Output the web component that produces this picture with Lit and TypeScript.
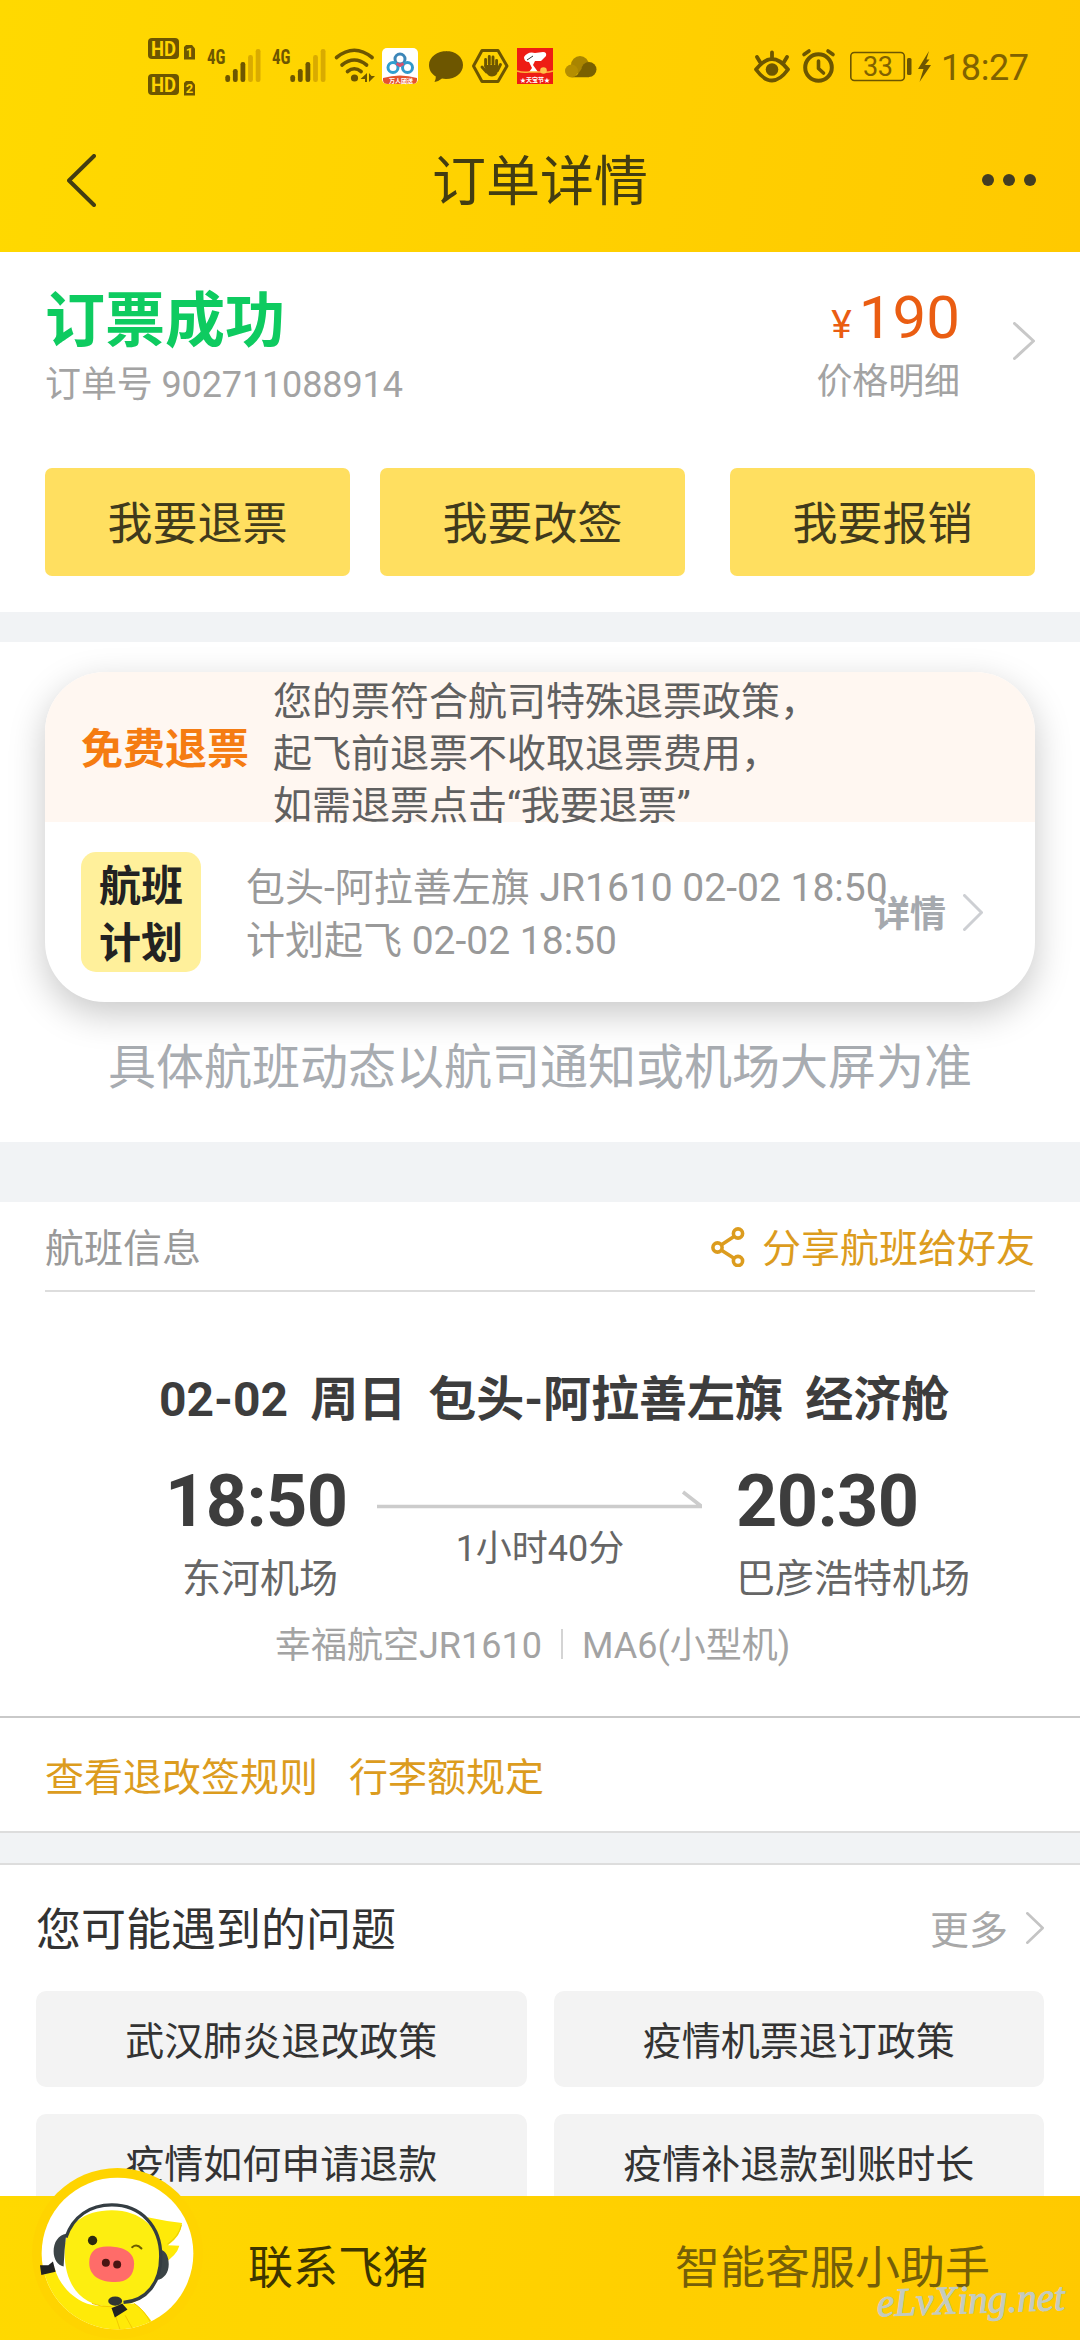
import { LitElement, html, css, svg } from "lit";
import { customElement, property } from "lit/decorators.js";

const FONT = css`Roboto, "Noto Sans CJK SC", sans-serif`;

@customElement("chevron-icon")
class ChevronIcon extends LitElement {
  @property({ type: Number }) w = 20;
  @property({ type: Number }) h = 36;
  @property({ type: Number }) thick = 3;
  @property({ type: Boolean }) back = false;

  static styles = css`
    :host { display: block; flex: none; }
    .icon { display: block; fill: none; stroke: currentColor; stroke-linecap: round; stroke-linejoin: round; }
  `;

  render() {
    const { w, h, thick: t } = this;
    const a = this.back ? w - t / 2 : t / 2;
    const b = this.back ? t / 2 : w - t / 2;
    return html`<svg class="icon" width=${w} height=${h} viewBox="0 0 ${w} ${h}" stroke-width=${t}>
      <path d="M${a} ${t / 2}L${b} ${h / 2}L${a} ${h - t / 2}" />
    </svg>`;
  }
}

@customElement("phone-status")
class PhoneStatus extends LitElement {
  static styles = css`
    :host { display: flex; justify-content: space-between; height: 90px; padding: 20px 0 0 130px; font-family: ${FONT}; }
    .icons { display: block; flex: none; }
    .ink { fill: #6d5600; }
    .line { fill: none; stroke: #6d5600; stroke-linecap: round; stroke-linejoin: round; }
    .dim { fill: #d9ab00; }
    .hd { font: 700 21px Roboto, sans-serif; fill: #ffd400; }
    .sim { font: 700 13px Roboto, sans-serif; fill: #ffd400; }
    .net { font: 700 21px "Roboto Condensed", Roboto, sans-serif; fill: #6d5600; }
    .pct { font: 400 27px Roboto, sans-serif; fill: #806200; }
    .time { font: 400 36px Roboto, sans-serif; fill: #806200; }
    .tiny { font: 700 6px "Noto Sans CJK SC", sans-serif; fill: #fff; }
  `;

  private hd(y: number, n: string) {
    return svg`<g transform="translate(148 ${y})">
      <rect class="ink" width="31" height="21" rx="4"/>
      <text class="hd" x="3" y="18" textLength="25" lengthAdjust="spacingAndGlyphs">HD</text>
      <path class="ink" d="M38 7h6l3 3.500v11H36V9z"/>
      <text class="sim" x="37.800" y="19.300">${n}</text></g>`;
  }

  private signal(x: number) {
    const tops = [75, 69, 62, 55, 49];
    return svg`<g transform="translate(${x} 0)">
      <text class="net" x="0" y="64" textLength="18.500" lengthAdjust="spacingAndGlyphs">4G</text>
      ${tops.map((t, i) => svg`<rect class=${i < 3 ? "ink" : "dim"} x=${18.3 + i * 7.6} y=${t} width="4.800" height=${82 - t} rx="2.200"/>`)}
    </g>`;
  }

  render() {
    return html`
      <svg class="icons" width="480" height="90" viewBox="130 20 480 90">
        ${this.hd(38, "1")}${this.hd(74, "2")}${this.signal(207)}${this.signal(272)}
        <g class="line" stroke-width="3.6">
          <path d="M336.500 57.500q17.800-14.500 35.600 0"/>
          <path d="M342 65q12.300-10 24.600 0"/>
          <path d="M347.500 71.500q6.800-5.500 13.600 0"/>
        </g>
        <circle class="ink" cx="354.500" cy="78" r="3.600"/>
        <path class="ink" d="M367 73v9h-2v-3h-4.500zM369 73v9l6-6h-3.500z"/>

        <rect x="382" y="48" width="36" height="36" rx="5" fill="#fff"/>
        <path d="M383 78q17-5 34 0v2q0 4-5 4h-24q-5 0-5-4z" fill="#e5532d"/>
        <g fill="none" stroke-width="3">
          <circle cx="400" cy="59" r="5" stroke="#3c86b8"/>
          <circle cx="393" cy="67.500" r="5" stroke="#2f9fd0"/>
          <circle cx="407.500" cy="67.500" r="5" stroke="#3199cc"/>
          <path d="M396.500 63.500l3.500 2l3.500-2" stroke="#d8506c"/>
        </g>
        <text class="tiny" x="389" y="82.500">万人团送</text>

        <path class="ink" d="M446 51c9.500 0 17 6 17 14s-7.500 14-17 14q-2.500 0-4-.4-3.500 3-7.500 3.400 1.500-2.500 1.300-5.500c-4.200-2.500-6.800-6.500-6.800-11.500 0-8 8.500-14 18-14z"/>

        <path class="line" stroke-width="3" d="M482 50.500h16l9 15.500-9 15.500h-16L473.500 66z"/>
        <g class="line" stroke-width="2.900">
          <path d="M485.600 66v-6.500M489.300 64v-7.500M493 64v-7M496.600 66v-5.500M482 67l4.500 5M500.500 64.500l-3 6"/>
        </g>
        <path class="ink" d="M484.200 65h13.800v5q-.5 6.500-6 6.500-4 0-6-4.500z"/>

        <rect x="517" y="48" width="36" height="36" fill="#ee1c14"/>
        <path fill="#fff" d="M524 57q4-6 11-4l8-1q4 0 3 4l-5 5h-6l-2 4 5 7h-9l3-4-3-6q-5 0-5-5z"/>
        <path d="M527 60l6-4" stroke="#333" stroke-width="1"/>
        <path d="M517 71q6 2 12 1h12q6 1 12-1" fill="none" stroke="#ffb13a" stroke-width="1.500"/>
        <circle cx="543.500" cy="70.500" r="3.300" fill="#ffc04a"/>
        <text class="tiny" x="520" y="81.500">★天宝节★</text>

        <circle cx="580" cy="65" r="9" fill="#a98500"/>
        <circle cx="571.500" cy="71" r="6.500" fill="#b58e00"/>
        <circle cx="589" cy="69.500" r="7.500" fill="#7a6000"/>
        <path fill="#7a6000" d="M571.500 77.300q5-.3 8-5.500t9.500-5v10.400z"/>
      </svg>
      <svg class="icons" width="350" height="90" viewBox="730 20 350 90">
        <path class="line" stroke-width="3.800" d="M756 69.500q16-21 32 0q-16 22-32 0zM772 52.500v5M757 57l3 5M787 57l-3 5"/>
        <circle class="ink" cx="772" cy="69.500" r="6.300"/>
        <circle class="line" cx="818.500" cy="67.500" r="13.300" stroke-width="4"/>
        <path class="line" stroke-width="3.600" d="M818.500 61v7.500l5 4.500M804 54.500l5-3.500M833 54.500l-5-3.500"/>
        <rect class="line" x="850.800" y="52.500" width="53.500" height="28" rx="3.500" stroke-width="1.600"/>
        <text class="pct" x="863" y="76" textLength="30">33</text>
        <rect class="ink" x="907" y="58" width="4.500" height="17" rx="1.500"/>
        <path class="ink" d="M929 51l-11 18h5.500l-4 13 11.500-17h-6l4.500-5.500h-3z"/>
        <text class="time" x="941" y="80" textLength="88">18:27</text>
      </svg>
    `;
  }
}

@customElement("pig-avatar")
class PigAvatar extends LitElement {
  static styles = css`
    :host { display: block; width: 171px; height: 171px; }
    .art { display: block; width: 100%; height: 100%; }
  `;

  render() {
    return html`<svg class="art" viewBox="65 55 514 514">
      <defs><clipPath id="disc"><circle cx="322" cy="312" r="228"/></clipPath></defs>
      <circle cx="322" cy="312" r="257" fill="#ffd400"/>
      <circle cx="322" cy="312" r="228" fill="#fff"/>
      <g clip-path="url(#disc)">
        <path fill="#ffea08" d="M412 203q55 12 104 17-2 38-42 67l34 2q-8 30-50 55z"/>
        <path fill="none" stroke="#e8c900" stroke-width="3" d="M514 226q-8 36-42 58"/>
        <path fill="#ffea08" d="M85 372l48-16c14 50 60 106 130 114l110-8q30 20 60 66l-60 50H200L90 450z"/>
        <path fill="#fff" d="M136 340c4 50 34 90 80 110-30-26-48-60-54-112z"/>
        <path fill="#fdee10" d="M163 310C160 226 220 182 305 182S452 235 452 312C454 405 400 472 304 472S163 400 163 310z"/>
        <path fill="none" stroke="#f2c900" stroke-width="3" d="M245 462q30 12 60 10M316 500l14 42M345 498l22 40M372 462q30 20 48 55"/>
      </g>
      <path fill="#3b4446" d="M168 253c-24 4-38 26-38 52 0 24 12 42 30 46q2-50 8-98z"/>
      <path fill="#3b4446" d="M450 300c18 4 26 22 26 44 0 26-14 44-36 48q10-40 10-92z"/>
      <path fill="none" stroke="#343d42" stroke-width="10" d="M167 264C188 200 240 166 305 166C392 166 452 230 452 320C452 400 410 454 340 459"/>
      <ellipse cx="315" cy="455" rx="21" ry="14" fill="#303534"/>
      <path fill="#222" d="M304 476l10 28 38-24-16-18-16 8zM89 347l4 30 43-10-8-31-14 11z"/>
      <circle cx="247" cy="273" r="14" fill="#2d2a10"/>
      <path fill="none" stroke="#6b5d00" stroke-width="6" stroke-linecap="round" d="M366 293q14-12 28 4"/>
      <path fill="#ff6c69" d="M290 291C325 290 372 300 372 342C372 380 350 398 315 398C270 398 237 380 237 340C237 305 258 291 290 291z"/>
      <circle cx="287" cy="340" r="12" fill="#4a1512"/>
      <circle cx="321" cy="345" r="12" fill="#4a1512"/>
    </svg>`;
  }
}

@customElement("app-root")
class AppRoot extends LitElement {
  private actions = ["我要退票", "我要改签", "我要报销"];
  private questions = ["武汉肺炎退改政策", "疫情机票退订政策", "疫情如何申请退款", "疫情补退款到账时长"];

  static styles = css`
    :host { display: block; width: 1080px; height: 2340px; overflow: hidden; background: #fff; font-family: ${FONT}; color: #333; }
    * { box-sizing: border-box; }
    .page { display: flex; flex-direction: column; height: 2340px; white-space: nowrap; }
    .top { flex: none; height: 252px; background: linear-gradient(100deg, #ffd900, #ffc900); }
    .nav { display: grid; grid-template-columns: 1fr auto 1fr; align-items: center; height: 162px; padding: 18px 45px 0 67px; color: #433d12; }
    .nav-title { font-size: 54px; line-height: 60px; padding: 6px 0 0; margin-left: -22px; }
    .back { justify-self: start; }
    .dots { display: flex; gap: 9px; justify-self: end; margin-right: -1px; }
    .dot { width: 12px; height: 12px; border-radius: 50%; background: #433d22; }

    .scroll { flex: none; height: 1944px; overflow: hidden; }
    .gap { height: 30px; background: #f1f3f5; }
    .gap.tall { height: 60px; }
    .gap.ruled { height: 34px; border: solid #ddd; border-width: 2px 0; }

    .order { height: 360px; padding: 0 45px; }
    .summary { display: flex; justify-content: space-between; height: 216px; padding-top: 34px; }
    .state { font-size: 60px; line-height: 72px; font-weight: 700; color: #0ecb60; }
    .sub { font-size: 36px; line-height: 48px; letter-spacing: -0.12px; color: #a3a3a3; margin-top: 3px; }
    .price-side { display: flex; gap: 53px; }
    .price-text { text-align: right; height: 140px; }
    .amount { font-size: 60px; line-height: 72px; height: 72px; color: #ea5d12; margin-top: -4px; }
    .yen { font-size: 39px; margin-right: 7px; line-height: 40px; }
    .price-text .sub { margin-top: 4px; }
    .go { color: #c8c8c8; margin-top: 36px; }
    .actions { display: flex; justify-content: space-between; }
    .action { width: 305px; height: 108px; border-radius: 7px; background: #ffdf60; color: #403a1c; font-size: 45px; line-height: 114px; text-align: center; }
    .action:nth-child(2) { margin-right: 15px; }

    .plan { height: 500px; padding: 30px 45px 0; }
    .card { position: relative; height: 330px; border-radius: 60px; background: #fff; box-shadow: 0 12px 36px rgba(0, 0, 0, 0.22); }
    .notice { display: flex; align-items: center; height: 150px; padding-left: 36px; border-radius: 60px 60px 0 0; background: #fff7f1; }
    .free { width: 192px; font-size: 42px; font-weight: 700; color: #f57c12; line-height: 60px; padding-top: 3px; height: 60px; }
    .policy { font-size: 39px; line-height: 52px; color: #606060; padding-top: 13px; }
    .flight { display: flex; height: 180px; padding: 30px 36px; }
    .tag { width: 120px; height: 120px; border-radius: 15px; background: #fff09b; font-size: 42px; font-weight: 700; line-height: 57px; text-align: center; padding-top: 6px; color: #222; }
    .schedule { font-size: 39px; line-height: 53px; color: #999; padding: 10px 0 0 45px; }
    .detail { position: absolute; right: 52px; bottom: 57px; display: flex; align-items: center; gap: 17px; font-size: 36px; font-weight: 700; line-height: 60px; color: #a5a9ae; }
    .detail-go { color: #cdcfd3; margin-top: -5px; }
    .hint { font-size: 48px; line-height: 60px; color: #a8acb1; text-align: center; margin-top: 36px; }

    .info { height: 514px; }
    .info-head { display: flex; justify-content: space-between; margin: 0 45px; height: 90px; border-bottom: 2px solid #ddd; font-size: 39px; line-height: 95px; color: #999; }
    .share { display: flex; align-items: center; height: 95px; gap: 17px; color: #dc9c1e; }
    .share-icon { display: block; fill: none; stroke: currentColor; stroke-width: 3.6; margin-top: -5px; }
    .route { padding: 78px 0 0 159px; height: 150px; font-size: 48px; line-height: 60px; font-weight: 700; color: #3d3d3d; white-space: pre; word-spacing: -0.9px; }
    .legs { display: grid; grid-template-columns: 212px 359px 300px; padding-left: 165px; height: 170px; padding-top: 18px; }
    .clock { font-size: 72px; font-weight: 700; line-height: 84px; letter-spacing: -0.6px; color: #3d3d3d; }
    .port { font-size: 39px; line-height: 50px; color: #666; margin-top: 10px; }
    .port.from { margin-left: 17px; }
    .arrow { display: block; }
    .middle { padding-top: 29px; }
    .span { font-size: 36px; line-height: 48px; color: #666; width: 326px; text-align: center; margin-top: 14px; }
    .craft { display: flex; align-items: center; padding-left: 275px; height: 60px; font-size: 36px; color: #a3a3a3; }
    .bar { width: 2px; height: 30px; background: #d4d4d4; margin: 3px 19px 0; }
    .rules { display: flex; gap: 31px; height: 115px; border-top: 2px solid #c9c9c9; padding-left: 45px; font-size: 39px; line-height: 120px; color: #dc9c1e; }

    .faq { padding: 0 36px; }
    .faq-head { display: flex; justify-content: space-between; height: 126px; font-size: 45px; line-height: 132px; }
    .more { display: flex; align-items: center; height: 132px; gap: 18px; font-size: 39px; color: #a8a8a8; }
    .more-go { color: #c4c4c4; margin-top: -7px; }
    .grid { display: grid; grid-template-columns: 1fr 1fr; gap: 27px; }
    .question { height: 96px; border-radius: 10px; background: #f3f3f3; font-size: 39px; line-height: 102px; text-align: center; }

    .bottom { position: relative; display: flex; justify-content: space-between; flex: none; height: 144px; padding: 0 90px 0 248px; background: linear-gradient(100deg, #ffd900, #ffc900); font-size: 45px; line-height: 145px; color: #3d3500; }
    .helper { color: #755f08; }
    .pig { position: absolute; left: 32px; top: -28px; }
    .mark { position: absolute; left: 872px; top: 80px; display: block; overflow: visible; font: italic 400 40px "URW Chancery L", "Liberation Serif", cursive; fill: #c3cbc0; stroke: #c3cbc0; stroke-width: 1; }
  `;

  render() {
    return html`<div class="page">
      <header class="top">
        <phone-status></phone-status>
        <div class="nav">
          <chevron-icon class="back" back .w=${29} .h=${53} .thick=${4}></chevron-icon>
          <div class="nav-title">订单详情</div>
          <div class="dots"><i class="dot"></i><i class="dot"></i><i class="dot"></i></div>
        </div>
      </header>

      <main class="scroll">
        <section class="order">
          <div class="summary">
            <div>
              <div class="state">订票成功</div>
              <div class="sub">订单号 902711088914</div>
            </div>
            <div class="price-side">
              <div class="price-text">
                <div class="amount"><span class="yen">¥</span>190</div>
                <div class="sub">价格明细</div>
              </div>
              <chevron-icon class="go" .w=${22} .h=${38}></chevron-icon>
            </div>
          </div>
          <div class="actions">${this.actions.map((a) => html`<div class="action">${a}</div>`)}</div>
        </section>

        <div class="gap"></div>

        <section class="plan">
          <div class="card">
            <div class="notice">
              <div class="free">免费退票</div>
              <div class="policy">您的票符合航司特殊退票政策，<br />起飞前退票不收取退票费用，<br />如需退票点击“我要退票”</div>
            </div>
            <div class="flight">
              <div class="tag">航班<br />计划</div>
              <div class="schedule">包头-阿拉善左旗 JR1610 02-02 18:50<br />计划起飞 02-02 18:50</div>
            </div>
            <div class="detail">详情<chevron-icon class="detail-go" .w=${20} .h=${37}></chevron-icon></div>
          </div>
          <div class="hint">具体航班动态以航司通知或机场大屏为准</div>
        </section>

        <div class="gap tall"></div>

        <section class="info">
          <div class="info-head">
            <span>航班信息</span>
            <span class="share">
              <svg class="share-icon" width="34" height="40" viewBox="0 0 34 40">
                <circle cx="27" cy="6.500" r="4.600" /><circle cx="6.500" cy="20.500" r="4.600" /><circle cx="27" cy="34" r="4.600" />
                <path d="M23 9.500L10.500 17.800M10.500 23.300L23 31.300" />
              </svg>
              分享航班给好友
            </span>
          </div>
          <div class="route">02-02  周日  包头-阿拉善左旗  经济舱</div>
          <div class="legs">
            <div><div class="clock">18:50</div><div class="port from">东河机场</div></div>
            <div class="middle">
              <svg class="arrow" width="328" height="22" viewBox="0 0 328 22" fill="none" stroke="#ccc" stroke-width="3.600"><path d="M0 17.500H325M306 3L324 17" /></svg>
              <div class="span">1小时40分</div>
            </div>
            <div><div class="clock">20:30</div><div class="port">巴彦浩特机场</div></div>
          </div>
          <div class="craft"><span>幸福航空JR1610</span><i class="bar"></i><span>MA6(小型机)</span></div>
        </section>
        <div class="rules"><span>查看退改签规则</span><span>行李额规定</span></div>

        <div class="gap ruled"></div>

        <section class="faq">
          <div class="faq-head">
            <span>您可能遇到的问题</span>
            <span class="more">更多<chevron-icon class="more-go" .w=${18} .h=${32} .thick=${2.6}></chevron-icon></span>
          </div>
          <div class="grid">${this.questions.map((q) => html`<div class="question">${q}</div>`)}</div>
        </section>
      </main>

      <footer class="bottom">
        <span>联系飞猪</span>
        <span class="helper">智能客服小助手</span>
        <pig-avatar class="pig"></pig-avatar>
        <svg class="mark" width="204" height="60" viewBox="0 0 204 60"><text x="5" y="37" textLength="188" lengthAdjust="spacingAndGlyphs" transform="rotate(-2 100 30)">eLvXing.net</text></svg>
      </footer>
    </div>`;
  }
}
